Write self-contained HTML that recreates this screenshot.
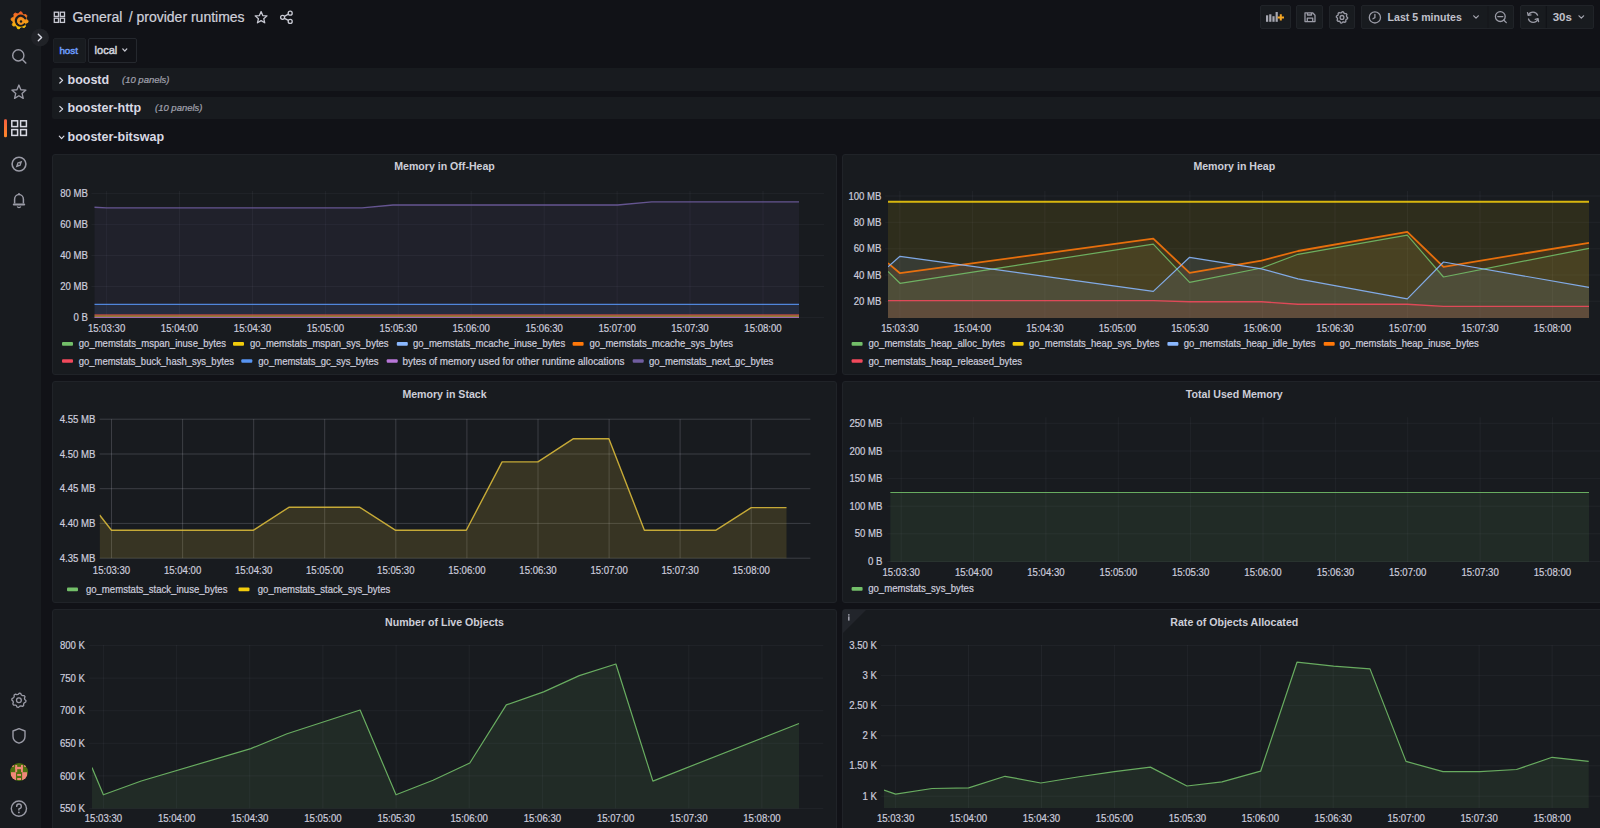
<!DOCTYPE html><html><head><meta charset="utf-8"><style>
*{margin:0;padding:0;box-sizing:border-box}
html,body{width:1600px;height:828px;overflow:hidden;background:#111217;font-family:"Liberation Sans",sans-serif;color:#ccccdc}
.abs{position:absolute}
.panel{position:absolute;background:#181b1f;border:1px solid #202328;border-radius:3px}
svg{position:absolute;left:0;top:0;overflow:visible}
svg text{font-family:"Liberation Sans",sans-serif}
</style></head><body>

<div class="abs" style="left:0;top:0;width:41px;height:828px;background:#181b1f"></div>
<div class="abs" style="left:52px;top:68px;width:1560px;height:23px;background:#181b1f;border-radius:2px"></div>
<div class="abs" style="left:52px;top:97px;width:1560px;height:22px;background:#181b1f;border-radius:2px"></div>
<div class="abs" style="left:52.5px;top:37.5px;width:33px;height:25px;background:#181b1f;border:1px solid #1e2126;border-radius:2px"></div>
<div class="abs" style="left:88px;top:37.5px;width:49px;height:25px;background:#111217;border:1px solid #25282e;border-radius:2px"></div>
<div class="abs" style="left:1260.0px;top:5px;width:31.0px;height:24px;background:#181b1f;border:1px solid #202328;border-radius:2px"></div>
<div class="abs" style="left:1296.0px;top:5px;width:27.0px;height:24px;background:#181b1f;border:1px solid #202328;border-radius:2px"></div>
<div class="abs" style="left:1329.0px;top:5px;width:26.0px;height:24px;background:#181b1f;border:1px solid #202328;border-radius:2px"></div>
<div class="abs" style="left:1361.0px;top:5px;width:153.0px;height:24px;background:#181b1f;border:1px solid #202328;border-radius:2px"></div>
<div class="abs" style="left:1520.0px;top:5px;width:74.0px;height:24px;background:#181b1f;border:1px solid #202328;border-radius:2px"></div>
<div class="panel" style="left:52px;top:154px;width:785px;height:221px"></div>
<div class="panel" style="left:842px;top:154px;width:785px;height:221px"></div>
<div class="panel" style="left:52px;top:381px;width:785px;height:222px"></div>
<div class="panel" style="left:842px;top:381px;width:785px;height:222px"></div>
<div class="panel" style="left:52px;top:609px;width:785px;height:240px"></div>
<div class="panel" style="left:842px;top:609px;width:785px;height:240px"></div>
<svg width="1600" height="828" viewBox="0 0 1600 828"><line x1="91.5" y1="193.6" x2="824.0" y2="193.6" stroke="rgba(204,204,220,0.055)" stroke-width="1"/>
<text x="88.0" y="197.2" font-size="11.0" fill="#ccccdc" text-anchor="end" font-weight="normal" font-style="normal" stroke="#ccccdc" stroke-width="0.22" textLength="27.75" lengthAdjust="spacingAndGlyphs">80 MB</text>
<line x1="91.5" y1="224.6" x2="824.0" y2="224.6" stroke="rgba(204,204,220,0.055)" stroke-width="1"/>
<text x="88.0" y="228.2" font-size="11.0" fill="#ccccdc" text-anchor="end" font-weight="normal" font-style="normal" stroke="#ccccdc" stroke-width="0.22" textLength="27.75" lengthAdjust="spacingAndGlyphs">60 MB</text>
<line x1="91.5" y1="255.5" x2="824.0" y2="255.5" stroke="rgba(204,204,220,0.055)" stroke-width="1"/>
<text x="88.0" y="259.1" font-size="11.0" fill="#ccccdc" text-anchor="end" font-weight="normal" font-style="normal" stroke="#ccccdc" stroke-width="0.22" textLength="27.75" lengthAdjust="spacingAndGlyphs">40 MB</text>
<line x1="91.5" y1="286.5" x2="824.0" y2="286.5" stroke="rgba(204,204,220,0.055)" stroke-width="1"/>
<text x="88.0" y="290.1" font-size="11.0" fill="#ccccdc" text-anchor="end" font-weight="normal" font-style="normal" stroke="#ccccdc" stroke-width="0.22" textLength="27.75" lengthAdjust="spacingAndGlyphs">20 MB</text>
<line x1="91.5" y1="317.4" x2="824.0" y2="317.4" stroke="rgba(204,204,220,0.055)" stroke-width="1"/>
<text x="88.0" y="321.0" font-size="11.0" fill="#ccccdc" text-anchor="end" font-weight="normal" font-style="normal" stroke="#ccccdc" stroke-width="0.22" textLength="14.41" lengthAdjust="spacingAndGlyphs">0 B</text>
<line x1="106.6" y1="191.0" x2="106.6" y2="318.0" stroke="rgba(204,204,220,0.055)" stroke-width="1"/>
<text x="106.6" y="331.6" font-size="11.0" fill="#ccccdc" text-anchor="middle" font-weight="normal" font-style="normal" stroke="#ccccdc" stroke-width="0.22" textLength="37.37" lengthAdjust="spacingAndGlyphs">15:03:30</text>
<line x1="179.5" y1="191.0" x2="179.5" y2="318.0" stroke="rgba(204,204,220,0.055)" stroke-width="1"/>
<text x="179.5" y="331.6" font-size="11.0" fill="#ccccdc" text-anchor="middle" font-weight="normal" font-style="normal" stroke="#ccccdc" stroke-width="0.22" textLength="37.37" lengthAdjust="spacingAndGlyphs">15:04:00</text>
<line x1="252.5" y1="191.0" x2="252.5" y2="318.0" stroke="rgba(204,204,220,0.055)" stroke-width="1"/>
<text x="252.5" y="331.6" font-size="11.0" fill="#ccccdc" text-anchor="middle" font-weight="normal" font-style="normal" stroke="#ccccdc" stroke-width="0.22" textLength="37.37" lengthAdjust="spacingAndGlyphs">15:04:30</text>
<line x1="325.4" y1="191.0" x2="325.4" y2="318.0" stroke="rgba(204,204,220,0.055)" stroke-width="1"/>
<text x="325.4" y="331.6" font-size="11.0" fill="#ccccdc" text-anchor="middle" font-weight="normal" font-style="normal" stroke="#ccccdc" stroke-width="0.22" textLength="37.37" lengthAdjust="spacingAndGlyphs">15:05:00</text>
<line x1="398.3" y1="191.0" x2="398.3" y2="318.0" stroke="rgba(204,204,220,0.055)" stroke-width="1"/>
<text x="398.3" y="331.6" font-size="11.0" fill="#ccccdc" text-anchor="middle" font-weight="normal" font-style="normal" stroke="#ccccdc" stroke-width="0.22" textLength="37.37" lengthAdjust="spacingAndGlyphs">15:05:30</text>
<line x1="471.2" y1="191.0" x2="471.2" y2="318.0" stroke="rgba(204,204,220,0.055)" stroke-width="1"/>
<text x="471.2" y="331.6" font-size="11.0" fill="#ccccdc" text-anchor="middle" font-weight="normal" font-style="normal" stroke="#ccccdc" stroke-width="0.22" textLength="37.37" lengthAdjust="spacingAndGlyphs">15:06:00</text>
<line x1="544.2" y1="191.0" x2="544.2" y2="318.0" stroke="rgba(204,204,220,0.055)" stroke-width="1"/>
<text x="544.2" y="331.6" font-size="11.0" fill="#ccccdc" text-anchor="middle" font-weight="normal" font-style="normal" stroke="#ccccdc" stroke-width="0.22" textLength="37.37" lengthAdjust="spacingAndGlyphs">15:06:30</text>
<line x1="617.1" y1="191.0" x2="617.1" y2="318.0" stroke="rgba(204,204,220,0.055)" stroke-width="1"/>
<text x="617.1" y="331.6" font-size="11.0" fill="#ccccdc" text-anchor="middle" font-weight="normal" font-style="normal" stroke="#ccccdc" stroke-width="0.22" textLength="37.37" lengthAdjust="spacingAndGlyphs">15:07:00</text>
<line x1="690.0" y1="191.0" x2="690.0" y2="318.0" stroke="rgba(204,204,220,0.055)" stroke-width="1"/>
<text x="690.0" y="331.6" font-size="11.0" fill="#ccccdc" text-anchor="middle" font-weight="normal" font-style="normal" stroke="#ccccdc" stroke-width="0.22" textLength="37.37" lengthAdjust="spacingAndGlyphs">15:07:30</text>
<line x1="763.0" y1="191.0" x2="763.0" y2="318.0" stroke="rgba(204,204,220,0.055)" stroke-width="1"/>
<text x="763.0" y="331.6" font-size="11.0" fill="#ccccdc" text-anchor="middle" font-weight="normal" font-style="normal" stroke="#ccccdc" stroke-width="0.22" textLength="37.37" lengthAdjust="spacingAndGlyphs">15:08:00</text>
<clipPath id="c30"><rect x="94.3" y="181.0" width="729.7" height="137.0"/></clipPath>
<g clip-path="url(#c30)">
<path d="M94.3,207.2 L106.6,207.9 L362.0,207.9 L393.0,205.0 L617.6,205.0 L651.7,201.9 L799.0,201.9 L799.0,320.0 L94.3,320.0Z" fill="#705da0" fill-opacity="0.1"/>
<path d="M94.3,304.4 L799.0,304.4 L799.0,320.0 L94.3,320.0Z" fill="#5794f2" fill-opacity="0.1"/>
<path d="M94.3,314.5 L799.0,314.5 L799.0,320.0 L94.3,320.0Z" fill="#f2495c" fill-opacity="0.1"/>
<path d="M94.3,315.3 L799.0,315.3 L799.0,320.0 L94.3,320.0Z" fill="#e8802a" fill-opacity="0.1"/>
<path d="M94.3,316.4 L799.0,316.4 L799.0,320.0 L94.3,320.0Z" fill="#a89a40" fill-opacity="0.1"/>
<path d="M94.3,317.6 L799.0,317.6 L799.0,320.0 L94.3,320.0Z" fill="#b877d9" fill-opacity="0.1"/>
<path d="M94.3,207.2 L106.6,207.9 L362.0,207.9 L393.0,205.0 L617.6,205.0 L651.7,201.9 L799.0,201.9" fill="none" stroke="#705da0" stroke-width="1.4" stroke-opacity="0.88" stroke-linejoin="round"/>
<path d="M94.3,304.4 L799.0,304.4" fill="none" stroke="#5794f2" stroke-width="1.2" stroke-opacity="0.88" stroke-linejoin="round"/>
<path d="M94.3,314.5 L799.0,314.5" fill="none" stroke="#f2495c" stroke-width="0.7" stroke-opacity="0.6" stroke-linejoin="round"/>
<path d="M94.3,315.3 L799.0,315.3" fill="none" stroke="#e8802a" stroke-width="0.9" stroke-opacity="0.8" stroke-linejoin="round"/>
<path d="M94.3,316.4 L799.0,316.4" fill="none" stroke="#a89a40" stroke-width="1.0" stroke-opacity="0.8" stroke-linejoin="round"/>
<path d="M94.3,317.6 L799.0,317.6" fill="none" stroke="#b877d9" stroke-width="1.0" stroke-opacity="0.8" stroke-linejoin="round"/>
</g>
<rect x="62.0" y="342.1" width="11" height="3.6" rx="1" fill="#73bf69"/>
<text x="78.8" y="347.4" font-size="10.3" fill="#ccccdc" text-anchor="start" font-weight="normal" font-style="normal" stroke="#ccccdc" stroke-width="0.22" textLength="147.2" lengthAdjust="spacingAndGlyphs">go_memstats_mspan_inuse_bytes</text>
<rect x="233.0" y="342.1" width="11" height="3.6" rx="1" fill="#f2cc0c"/>
<text x="250.0" y="347.4" font-size="10.3" fill="#ccccdc" text-anchor="start" font-weight="normal" font-style="normal" stroke="#ccccdc" stroke-width="0.22" textLength="138.6" lengthAdjust="spacingAndGlyphs">go_memstats_mspan_sys_bytes</text>
<rect x="396.8" y="342.1" width="11" height="3.6" rx="1" fill="#8ab8ff"/>
<text x="413.0" y="347.4" font-size="10.3" fill="#ccccdc" text-anchor="start" font-weight="normal" font-style="normal" stroke="#ccccdc" stroke-width="0.22" textLength="152.2" lengthAdjust="spacingAndGlyphs">go_memstats_mcache_inuse_bytes</text>
<rect x="572.6" y="342.1" width="11" height="3.6" rx="1" fill="#ff780a"/>
<text x="589.5" y="347.4" font-size="10.3" fill="#ccccdc" text-anchor="start" font-weight="normal" font-style="normal" stroke="#ccccdc" stroke-width="0.22" textLength="143.5" lengthAdjust="spacingAndGlyphs">go_memstats_mcache_sys_bytes</text>
<rect x="62.0" y="359.2" width="11" height="3.6" rx="1" fill="#f2495c"/>
<text x="78.8" y="364.5" font-size="10.3" fill="#ccccdc" text-anchor="start" font-weight="normal" font-style="normal" stroke="#ccccdc" stroke-width="0.22" textLength="155.2" lengthAdjust="spacingAndGlyphs">go_memstats_buck_hash_sys_bytes</text>
<rect x="241.3" y="359.2" width="11" height="3.6" rx="1" fill="#5794f2"/>
<text x="258.3" y="364.5" font-size="10.3" fill="#ccccdc" text-anchor="start" font-weight="normal" font-style="normal" stroke="#ccccdc" stroke-width="0.22" textLength="120.2" lengthAdjust="spacingAndGlyphs">go_memstats_gc_sys_bytes</text>
<rect x="386.7" y="359.2" width="11" height="3.6" rx="1" fill="#b877d9"/>
<text x="402.5" y="364.5" font-size="10.3" fill="#ccccdc" text-anchor="start" font-weight="normal" font-style="normal" stroke="#ccccdc" stroke-width="0.22" textLength="222.0" lengthAdjust="spacingAndGlyphs">bytes of memory used for other runtime allocations</text>
<rect x="632.7" y="359.2" width="11" height="3.6" rx="1" fill="#705da0"/>
<text x="649.0" y="364.5" font-size="10.3" fill="#ccccdc" text-anchor="start" font-weight="normal" font-style="normal" stroke="#ccccdc" stroke-width="0.22" textLength="124.4" lengthAdjust="spacingAndGlyphs">go_memstats_next_gc_bytes</text>
<line x1="885.1" y1="196.0" x2="1600.0" y2="196.0" stroke="rgba(204,204,220,0.055)" stroke-width="1"/>
<text x="881.5" y="199.6" font-size="11.0" fill="#ccccdc" text-anchor="end" font-weight="normal" font-style="normal" stroke="#ccccdc" stroke-width="0.22" textLength="33.09" lengthAdjust="spacingAndGlyphs">100 MB</text>
<line x1="885.1" y1="222.3" x2="1600.0" y2="222.3" stroke="rgba(204,204,220,0.055)" stroke-width="1"/>
<text x="881.5" y="225.9" font-size="11.0" fill="#ccccdc" text-anchor="end" font-weight="normal" font-style="normal" stroke="#ccccdc" stroke-width="0.22" textLength="27.75" lengthAdjust="spacingAndGlyphs">80 MB</text>
<line x1="885.1" y1="248.8" x2="1600.0" y2="248.8" stroke="rgba(204,204,220,0.055)" stroke-width="1"/>
<text x="881.5" y="252.4" font-size="11.0" fill="#ccccdc" text-anchor="end" font-weight="normal" font-style="normal" stroke="#ccccdc" stroke-width="0.22" textLength="27.75" lengthAdjust="spacingAndGlyphs">60 MB</text>
<line x1="885.1" y1="275.0" x2="1600.0" y2="275.0" stroke="rgba(204,204,220,0.055)" stroke-width="1"/>
<text x="881.5" y="278.6" font-size="11.0" fill="#ccccdc" text-anchor="end" font-weight="normal" font-style="normal" stroke="#ccccdc" stroke-width="0.22" textLength="27.75" lengthAdjust="spacingAndGlyphs">40 MB</text>
<line x1="885.1" y1="301.2" x2="1600.0" y2="301.2" stroke="rgba(204,204,220,0.055)" stroke-width="1"/>
<text x="881.5" y="304.8" font-size="11.0" fill="#ccccdc" text-anchor="end" font-weight="normal" font-style="normal" stroke="#ccccdc" stroke-width="0.22" textLength="27.75" lengthAdjust="spacingAndGlyphs">20 MB</text>
<line x1="899.9" y1="191.0" x2="899.9" y2="318.0" stroke="rgba(204,204,220,0.055)" stroke-width="1"/>
<text x="899.9" y="331.6" font-size="11.0" fill="#ccccdc" text-anchor="middle" font-weight="normal" font-style="normal" stroke="#ccccdc" stroke-width="0.22" textLength="37.37" lengthAdjust="spacingAndGlyphs">15:03:30</text>
<line x1="972.4" y1="191.0" x2="972.4" y2="318.0" stroke="rgba(204,204,220,0.055)" stroke-width="1"/>
<text x="972.4" y="331.6" font-size="11.0" fill="#ccccdc" text-anchor="middle" font-weight="normal" font-style="normal" stroke="#ccccdc" stroke-width="0.22" textLength="37.37" lengthAdjust="spacingAndGlyphs">15:04:00</text>
<line x1="1044.9" y1="191.0" x2="1044.9" y2="318.0" stroke="rgba(204,204,220,0.055)" stroke-width="1"/>
<text x="1044.9" y="331.6" font-size="11.0" fill="#ccccdc" text-anchor="middle" font-weight="normal" font-style="normal" stroke="#ccccdc" stroke-width="0.22" textLength="37.37" lengthAdjust="spacingAndGlyphs">15:04:30</text>
<line x1="1117.4" y1="191.0" x2="1117.4" y2="318.0" stroke="rgba(204,204,220,0.055)" stroke-width="1"/>
<text x="1117.4" y="331.6" font-size="11.0" fill="#ccccdc" text-anchor="middle" font-weight="normal" font-style="normal" stroke="#ccccdc" stroke-width="0.22" textLength="37.37" lengthAdjust="spacingAndGlyphs">15:05:00</text>
<line x1="1189.9" y1="191.0" x2="1189.9" y2="318.0" stroke="rgba(204,204,220,0.055)" stroke-width="1"/>
<text x="1189.9" y="331.6" font-size="11.0" fill="#ccccdc" text-anchor="middle" font-weight="normal" font-style="normal" stroke="#ccccdc" stroke-width="0.22" textLength="37.37" lengthAdjust="spacingAndGlyphs">15:05:30</text>
<line x1="1262.5" y1="191.0" x2="1262.5" y2="318.0" stroke="rgba(204,204,220,0.055)" stroke-width="1"/>
<text x="1262.5" y="331.6" font-size="11.0" fill="#ccccdc" text-anchor="middle" font-weight="normal" font-style="normal" stroke="#ccccdc" stroke-width="0.22" textLength="37.37" lengthAdjust="spacingAndGlyphs">15:06:00</text>
<line x1="1335.0" y1="191.0" x2="1335.0" y2="318.0" stroke="rgba(204,204,220,0.055)" stroke-width="1"/>
<text x="1335.0" y="331.6" font-size="11.0" fill="#ccccdc" text-anchor="middle" font-weight="normal" font-style="normal" stroke="#ccccdc" stroke-width="0.22" textLength="37.37" lengthAdjust="spacingAndGlyphs">15:06:30</text>
<line x1="1407.5" y1="191.0" x2="1407.5" y2="318.0" stroke="rgba(204,204,220,0.055)" stroke-width="1"/>
<text x="1407.5" y="331.6" font-size="11.0" fill="#ccccdc" text-anchor="middle" font-weight="normal" font-style="normal" stroke="#ccccdc" stroke-width="0.22" textLength="37.37" lengthAdjust="spacingAndGlyphs">15:07:00</text>
<line x1="1480.0" y1="191.0" x2="1480.0" y2="318.0" stroke="rgba(204,204,220,0.055)" stroke-width="1"/>
<text x="1480.0" y="331.6" font-size="11.0" fill="#ccccdc" text-anchor="middle" font-weight="normal" font-style="normal" stroke="#ccccdc" stroke-width="0.22" textLength="37.37" lengthAdjust="spacingAndGlyphs">15:07:30</text>
<line x1="1552.5" y1="191.0" x2="1552.5" y2="318.0" stroke="rgba(204,204,220,0.055)" stroke-width="1"/>
<text x="1552.5" y="331.6" font-size="11.0" fill="#ccccdc" text-anchor="middle" font-weight="normal" font-style="normal" stroke="#ccccdc" stroke-width="0.22" textLength="37.37" lengthAdjust="spacingAndGlyphs">15:08:00</text>
<clipPath id="c91"><rect x="887.9" y="182.0" width="712.1" height="136.0"/></clipPath>
<g clip-path="url(#c91)">
<path d="M888.0,201.8 L1589.0,201.8 L1589.0,320.0 L888.0,320.0Z" fill="#f2cc0c" fill-opacity="0.1"/>
<path d="M888.0,263.1 L900.0,273.2 L1153.3,238.7 L1189.6,272.8 L1261.5,260.6 L1298.0,251.0 L1407.3,231.9 L1443.5,266.8 L1589.0,242.8 L1589.0,320.0 L888.0,320.0Z" fill="#ff780a" fill-opacity="0.1"/>
<path d="M888.0,271.4 L900.0,283.3 L1153.3,244.2 L1189.6,282.4 L1261.5,268.0 L1298.0,254.3 L1407.3,235.2 L1443.5,277.0 L1589.0,248.3 L1589.0,320.0 L888.0,320.0Z" fill="#73bf69" fill-opacity="0.1"/>
<path d="M888.0,266.9 L900.0,256.3 L1153.3,291.4 L1189.6,257.3 L1261.5,268.8 L1298.0,278.9 L1407.3,298.8 L1443.5,262.0 L1589.0,287.3 L1589.0,320.0 L888.0,320.0Z" fill="#8ab8ff" fill-opacity="0.1"/>
<path d="M888.0,300.6 L900.0,300.6 L1153.3,300.6 L1189.6,301.8 L1261.5,301.8 L1298.0,304.2 L1407.3,304.2 L1443.5,306.4 L1589.0,306.4 L1589.0,320.0 L888.0,320.0Z" fill="#f2495c" fill-opacity="0.1"/>
<path d="M888.0,201.8 L1589.0,201.8" fill="none" stroke="#f2cc0c" stroke-width="2" stroke-opacity="0.88" stroke-linejoin="round"/>
<path d="M888.0,263.1 L900.0,273.2 L1153.3,238.7 L1189.6,272.8 L1261.5,260.6 L1298.0,251.0 L1407.3,231.9 L1443.5,266.8 L1589.0,242.8" fill="none" stroke="#ff780a" stroke-width="1.8" stroke-opacity="0.88" stroke-linejoin="round"/>
<path d="M888.0,271.4 L900.0,283.3 L1153.3,244.2 L1189.6,282.4 L1261.5,268.0 L1298.0,254.3 L1407.3,235.2 L1443.5,277.0 L1589.0,248.3" fill="none" stroke="#73bf69" stroke-width="1.2" stroke-opacity="0.88" stroke-linejoin="round"/>
<path d="M888.0,266.9 L900.0,256.3 L1153.3,291.4 L1189.6,257.3 L1261.5,268.8 L1298.0,278.9 L1407.3,298.8 L1443.5,262.0 L1589.0,287.3" fill="none" stroke="#8ab8ff" stroke-width="1.2" stroke-opacity="0.88" stroke-linejoin="round"/>
<path d="M888.0,300.6 L900.0,300.6 L1153.3,300.6 L1189.6,301.8 L1261.5,301.8 L1298.0,304.2 L1407.3,304.2 L1443.5,306.4 L1589.0,306.4" fill="none" stroke="#f2495c" stroke-width="1.4" stroke-opacity="0.88" stroke-linejoin="round"/>
</g>
<rect x="851.6" y="342.1" width="11" height="3.6" rx="1" fill="#73bf69"/>
<text x="868.5" y="347.4" font-size="10.3" fill="#ccccdc" text-anchor="start" font-weight="normal" font-style="normal" stroke="#ccccdc" stroke-width="0.22" textLength="136.5" lengthAdjust="spacingAndGlyphs">go_memstats_heap_alloc_bytes</text>
<rect x="1012.6" y="342.1" width="11" height="3.6" rx="1" fill="#f2cc0c"/>
<text x="1029.0" y="347.4" font-size="10.3" fill="#ccccdc" text-anchor="start" font-weight="normal" font-style="normal" stroke="#ccccdc" stroke-width="0.22" textLength="130.5" lengthAdjust="spacingAndGlyphs">go_memstats_heap_sys_bytes</text>
<rect x="1167.4" y="342.1" width="11" height="3.6" rx="1" fill="#8ab8ff"/>
<text x="1183.8" y="347.4" font-size="10.3" fill="#ccccdc" text-anchor="start" font-weight="normal" font-style="normal" stroke="#ccccdc" stroke-width="0.22" textLength="131.7" lengthAdjust="spacingAndGlyphs">go_memstats_heap_idle_bytes</text>
<rect x="1323.7" y="342.1" width="11" height="3.6" rx="1" fill="#ff780a"/>
<text x="1339.6" y="347.4" font-size="10.3" fill="#ccccdc" text-anchor="start" font-weight="normal" font-style="normal" stroke="#ccccdc" stroke-width="0.22" textLength="139.2" lengthAdjust="spacingAndGlyphs">go_memstats_heap_inuse_bytes</text>
<rect x="851.6" y="359.2" width="11" height="3.6" rx="1" fill="#f2495c"/>
<text x="868.5" y="364.5" font-size="10.3" fill="#ccccdc" text-anchor="start" font-weight="normal" font-style="normal" stroke="#ccccdc" stroke-width="0.22" textLength="153.5" lengthAdjust="spacingAndGlyphs">go_memstats_heap_released_bytes</text>
<line x1="99.6" y1="419.2" x2="810.4" y2="419.2" stroke="rgba(204,204,220,0.2)" stroke-width="1"/>
<text x="95.5" y="422.8" font-size="11.0" fill="#ccccdc" text-anchor="end" font-weight="normal" font-style="normal" stroke="#ccccdc" stroke-width="0.22" textLength="35.75" lengthAdjust="spacingAndGlyphs">4.55 MB</text>
<line x1="99.6" y1="454.0" x2="810.4" y2="454.0" stroke="rgba(204,204,220,0.2)" stroke-width="1"/>
<text x="95.5" y="457.6" font-size="11.0" fill="#ccccdc" text-anchor="end" font-weight="normal" font-style="normal" stroke="#ccccdc" stroke-width="0.22" textLength="35.75" lengthAdjust="spacingAndGlyphs">4.50 MB</text>
<line x1="99.6" y1="488.7" x2="810.4" y2="488.7" stroke="rgba(204,204,220,0.2)" stroke-width="1"/>
<text x="95.5" y="492.3" font-size="11.0" fill="#ccccdc" text-anchor="end" font-weight="normal" font-style="normal" stroke="#ccccdc" stroke-width="0.22" textLength="35.75" lengthAdjust="spacingAndGlyphs">4.45 MB</text>
<line x1="99.6" y1="523.4" x2="810.4" y2="523.4" stroke="rgba(204,204,220,0.2)" stroke-width="1"/>
<text x="95.5" y="527.0" font-size="11.0" fill="#ccccdc" text-anchor="end" font-weight="normal" font-style="normal" stroke="#ccccdc" stroke-width="0.22" textLength="35.75" lengthAdjust="spacingAndGlyphs">4.40 MB</text>
<line x1="99.6" y1="558.2" x2="810.4" y2="558.2" stroke="rgba(204,204,220,0.2)" stroke-width="1"/>
<text x="95.5" y="561.8" font-size="11.0" fill="#ccccdc" text-anchor="end" font-weight="normal" font-style="normal" stroke="#ccccdc" stroke-width="0.22" textLength="35.75" lengthAdjust="spacingAndGlyphs">4.35 MB</text>
<line x1="111.5" y1="419.2" x2="111.5" y2="558.2" stroke="rgba(204,204,220,0.2)" stroke-width="1"/>
<text x="111.5" y="573.6" font-size="11.0" fill="#ccccdc" text-anchor="middle" font-weight="normal" font-style="normal" stroke="#ccccdc" stroke-width="0.22" textLength="37.37" lengthAdjust="spacingAndGlyphs">15:03:30</text>
<line x1="182.6" y1="419.2" x2="182.6" y2="558.2" stroke="rgba(204,204,220,0.2)" stroke-width="1"/>
<text x="182.6" y="573.6" font-size="11.0" fill="#ccccdc" text-anchor="middle" font-weight="normal" font-style="normal" stroke="#ccccdc" stroke-width="0.22" textLength="37.37" lengthAdjust="spacingAndGlyphs">15:04:00</text>
<line x1="253.7" y1="419.2" x2="253.7" y2="558.2" stroke="rgba(204,204,220,0.2)" stroke-width="1"/>
<text x="253.7" y="573.6" font-size="11.0" fill="#ccccdc" text-anchor="middle" font-weight="normal" font-style="normal" stroke="#ccccdc" stroke-width="0.22" textLength="37.37" lengthAdjust="spacingAndGlyphs">15:04:30</text>
<line x1="324.7" y1="419.2" x2="324.7" y2="558.2" stroke="rgba(204,204,220,0.2)" stroke-width="1"/>
<text x="324.7" y="573.6" font-size="11.0" fill="#ccccdc" text-anchor="middle" font-weight="normal" font-style="normal" stroke="#ccccdc" stroke-width="0.22" textLength="37.37" lengthAdjust="spacingAndGlyphs">15:05:00</text>
<line x1="395.8" y1="419.2" x2="395.8" y2="558.2" stroke="rgba(204,204,220,0.2)" stroke-width="1"/>
<text x="395.8" y="573.6" font-size="11.0" fill="#ccccdc" text-anchor="middle" font-weight="normal" font-style="normal" stroke="#ccccdc" stroke-width="0.22" textLength="37.37" lengthAdjust="spacingAndGlyphs">15:05:30</text>
<line x1="466.9" y1="419.2" x2="466.9" y2="558.2" stroke="rgba(204,204,220,0.2)" stroke-width="1"/>
<text x="466.9" y="573.6" font-size="11.0" fill="#ccccdc" text-anchor="middle" font-weight="normal" font-style="normal" stroke="#ccccdc" stroke-width="0.22" textLength="37.37" lengthAdjust="spacingAndGlyphs">15:06:00</text>
<line x1="538.0" y1="419.2" x2="538.0" y2="558.2" stroke="rgba(204,204,220,0.2)" stroke-width="1"/>
<text x="538.0" y="573.6" font-size="11.0" fill="#ccccdc" text-anchor="middle" font-weight="normal" font-style="normal" stroke="#ccccdc" stroke-width="0.22" textLength="37.37" lengthAdjust="spacingAndGlyphs">15:06:30</text>
<line x1="609.1" y1="419.2" x2="609.1" y2="558.2" stroke="rgba(204,204,220,0.2)" stroke-width="1"/>
<text x="609.1" y="573.6" font-size="11.0" fill="#ccccdc" text-anchor="middle" font-weight="normal" font-style="normal" stroke="#ccccdc" stroke-width="0.22" textLength="37.37" lengthAdjust="spacingAndGlyphs">15:07:00</text>
<line x1="680.1" y1="419.2" x2="680.1" y2="558.2" stroke="rgba(204,204,220,0.2)" stroke-width="1"/>
<text x="680.1" y="573.6" font-size="11.0" fill="#ccccdc" text-anchor="middle" font-weight="normal" font-style="normal" stroke="#ccccdc" stroke-width="0.22" textLength="37.37" lengthAdjust="spacingAndGlyphs">15:07:30</text>
<line x1="751.2" y1="419.2" x2="751.2" y2="558.2" stroke="rgba(204,204,220,0.2)" stroke-width="1"/>
<text x="751.2" y="573.6" font-size="11.0" fill="#ccccdc" text-anchor="middle" font-weight="normal" font-style="normal" stroke="#ccccdc" stroke-width="0.22" textLength="37.37" lengthAdjust="spacingAndGlyphs">15:08:00</text>
<clipPath id="c144"><rect x="99.6" y="413.2" width="710.8" height="145.0"/></clipPath>
<g clip-path="url(#c144)">
<path d="M99.6,515.0 L111.5,530.2 L253.5,530.2 L288.9,507.3 L359.8,507.3 L395.3,530.2 L466.3,530.2 L502.1,461.9 L537.9,461.9 L573.1,438.8 L608.9,438.8 L644.4,530.2 L716.0,530.2 L751.2,507.6 L786.5,507.6 L786.5,560.2 L99.6,560.2Z" fill="#dcbc3a" fill-opacity="0.16"/>
<path d="M99.6,515.0 L111.5,530.2 L253.5,530.2 L288.9,507.3 L359.8,507.3 L395.3,530.2 L466.3,530.2 L502.1,461.9 L537.9,461.9 L573.1,438.8 L608.9,438.8 L644.4,530.2 L716.0,530.2 L751.2,507.6 L786.5,507.6" fill="none" stroke="#dcbc3a" stroke-width="1.4" stroke-opacity="0.88" stroke-linejoin="round"/>
</g>
<rect x="67.0" y="587.6" width="11" height="3.6" rx="1" fill="#73bf69"/>
<text x="85.9" y="592.9" font-size="10.3" fill="#ccccdc" text-anchor="start" font-weight="normal" font-style="normal" stroke="#ccccdc" stroke-width="0.22" textLength="141.6" lengthAdjust="spacingAndGlyphs">go_memstats_stack_inuse_bytes</text>
<rect x="238.5" y="587.6" width="11" height="3.6" rx="1" fill="#f2cc0c"/>
<text x="257.8" y="592.9" font-size="10.3" fill="#ccccdc" text-anchor="start" font-weight="normal" font-style="normal" stroke="#ccccdc" stroke-width="0.22" textLength="132.5" lengthAdjust="spacingAndGlyphs">go_memstats_stack_sys_bytes</text>
<line x1="887.4" y1="423.3" x2="1600.0" y2="423.3" stroke="rgba(204,204,220,0.055)" stroke-width="1"/>
<text x="882.5" y="426.9" font-size="11.0" fill="#ccccdc" text-anchor="end" font-weight="normal" font-style="normal" stroke="#ccccdc" stroke-width="0.22" textLength="33.09" lengthAdjust="spacingAndGlyphs">250 MB</text>
<line x1="887.4" y1="451.0" x2="1600.0" y2="451.0" stroke="rgba(204,204,220,0.055)" stroke-width="1"/>
<text x="882.5" y="454.6" font-size="11.0" fill="#ccccdc" text-anchor="end" font-weight="normal" font-style="normal" stroke="#ccccdc" stroke-width="0.22" textLength="33.09" lengthAdjust="spacingAndGlyphs">200 MB</text>
<line x1="887.4" y1="478.6" x2="1600.0" y2="478.6" stroke="rgba(204,204,220,0.055)" stroke-width="1"/>
<text x="882.5" y="482.2" font-size="11.0" fill="#ccccdc" text-anchor="end" font-weight="normal" font-style="normal" stroke="#ccccdc" stroke-width="0.22" textLength="33.09" lengthAdjust="spacingAndGlyphs">150 MB</text>
<line x1="887.4" y1="506.2" x2="1600.0" y2="506.2" stroke="rgba(204,204,220,0.055)" stroke-width="1"/>
<text x="882.5" y="509.8" font-size="11.0" fill="#ccccdc" text-anchor="end" font-weight="normal" font-style="normal" stroke="#ccccdc" stroke-width="0.22" textLength="33.09" lengthAdjust="spacingAndGlyphs">100 MB</text>
<line x1="887.4" y1="533.8" x2="1600.0" y2="533.8" stroke="rgba(204,204,220,0.055)" stroke-width="1"/>
<text x="882.5" y="537.4" font-size="11.0" fill="#ccccdc" text-anchor="end" font-weight="normal" font-style="normal" stroke="#ccccdc" stroke-width="0.22" textLength="27.75" lengthAdjust="spacingAndGlyphs">50 MB</text>
<line x1="887.4" y1="561.5" x2="1600.0" y2="561.5" stroke="rgba(204,204,220,0.055)" stroke-width="1"/>
<text x="882.5" y="565.1" font-size="11.0" fill="#ccccdc" text-anchor="end" font-weight="normal" font-style="normal" stroke="#ccccdc" stroke-width="0.22" textLength="14.41" lengthAdjust="spacingAndGlyphs">0 B</text>
<line x1="901.2" y1="417.3" x2="901.2" y2="562.0" stroke="rgba(204,204,220,0.055)" stroke-width="1"/>
<text x="901.2" y="575.6" font-size="11.0" fill="#ccccdc" text-anchor="middle" font-weight="normal" font-style="normal" stroke="#ccccdc" stroke-width="0.22" textLength="37.37" lengthAdjust="spacingAndGlyphs">15:03:30</text>
<line x1="973.6" y1="417.3" x2="973.6" y2="562.0" stroke="rgba(204,204,220,0.055)" stroke-width="1"/>
<text x="973.6" y="575.6" font-size="11.0" fill="#ccccdc" text-anchor="middle" font-weight="normal" font-style="normal" stroke="#ccccdc" stroke-width="0.22" textLength="37.37" lengthAdjust="spacingAndGlyphs">15:04:00</text>
<line x1="1045.9" y1="417.3" x2="1045.9" y2="562.0" stroke="rgba(204,204,220,0.055)" stroke-width="1"/>
<text x="1045.9" y="575.6" font-size="11.0" fill="#ccccdc" text-anchor="middle" font-weight="normal" font-style="normal" stroke="#ccccdc" stroke-width="0.22" textLength="37.37" lengthAdjust="spacingAndGlyphs">15:04:30</text>
<line x1="1118.3" y1="417.3" x2="1118.3" y2="562.0" stroke="rgba(204,204,220,0.055)" stroke-width="1"/>
<text x="1118.3" y="575.6" font-size="11.0" fill="#ccccdc" text-anchor="middle" font-weight="normal" font-style="normal" stroke="#ccccdc" stroke-width="0.22" textLength="37.37" lengthAdjust="spacingAndGlyphs">15:05:00</text>
<line x1="1190.6" y1="417.3" x2="1190.6" y2="562.0" stroke="rgba(204,204,220,0.055)" stroke-width="1"/>
<text x="1190.6" y="575.6" font-size="11.0" fill="#ccccdc" text-anchor="middle" font-weight="normal" font-style="normal" stroke="#ccccdc" stroke-width="0.22" textLength="37.37" lengthAdjust="spacingAndGlyphs">15:05:30</text>
<line x1="1263.0" y1="417.3" x2="1263.0" y2="562.0" stroke="rgba(204,204,220,0.055)" stroke-width="1"/>
<text x="1263.0" y="575.6" font-size="11.0" fill="#ccccdc" text-anchor="middle" font-weight="normal" font-style="normal" stroke="#ccccdc" stroke-width="0.22" textLength="37.37" lengthAdjust="spacingAndGlyphs">15:06:00</text>
<line x1="1335.4" y1="417.3" x2="1335.4" y2="562.0" stroke="rgba(204,204,220,0.055)" stroke-width="1"/>
<text x="1335.4" y="575.6" font-size="11.0" fill="#ccccdc" text-anchor="middle" font-weight="normal" font-style="normal" stroke="#ccccdc" stroke-width="0.22" textLength="37.37" lengthAdjust="spacingAndGlyphs">15:06:30</text>
<line x1="1407.7" y1="417.3" x2="1407.7" y2="562.0" stroke="rgba(204,204,220,0.055)" stroke-width="1"/>
<text x="1407.7" y="575.6" font-size="11.0" fill="#ccccdc" text-anchor="middle" font-weight="normal" font-style="normal" stroke="#ccccdc" stroke-width="0.22" textLength="37.37" lengthAdjust="spacingAndGlyphs">15:07:00</text>
<line x1="1480.1" y1="417.3" x2="1480.1" y2="562.0" stroke="rgba(204,204,220,0.055)" stroke-width="1"/>
<text x="1480.1" y="575.6" font-size="11.0" fill="#ccccdc" text-anchor="middle" font-weight="normal" font-style="normal" stroke="#ccccdc" stroke-width="0.22" textLength="37.37" lengthAdjust="spacingAndGlyphs">15:07:30</text>
<line x1="1552.4" y1="417.3" x2="1552.4" y2="562.0" stroke="rgba(204,204,220,0.055)" stroke-width="1"/>
<text x="1552.4" y="575.6" font-size="11.0" fill="#ccccdc" text-anchor="middle" font-weight="normal" font-style="normal" stroke="#ccccdc" stroke-width="0.22" textLength="37.37" lengthAdjust="spacingAndGlyphs">15:08:00</text>
<clipPath id="c185"><rect x="890.2" y="410.0" width="709.8" height="152.0"/></clipPath>
<g clip-path="url(#c185)">
<path d="M890.2,492.5 L1589.0,492.5 L1589.0,564.0 L890.2,564.0Z" fill="#73bf69" fill-opacity="0.1"/>
<path d="M890.2,492.5 L1589.0,492.5" fill="none" stroke="#73bf69" stroke-width="1.2" stroke-opacity="0.88" stroke-linejoin="round"/>
</g>
<rect x="851.6" y="587.1" width="11" height="3.6" rx="1" fill="#73bf69"/>
<text x="868.2" y="592.4" font-size="10.3" fill="#ccccdc" text-anchor="start" font-weight="normal" font-style="normal" stroke="#ccccdc" stroke-width="0.22" textLength="105.5" lengthAdjust="spacingAndGlyphs">go_memstats_sys_bytes</text>
<line x1="89.2" y1="645.4" x2="823.3" y2="645.4" stroke="rgba(204,204,220,0.055)" stroke-width="1"/>
<text x="85.0" y="649.0" font-size="11.0" fill="#ccccdc" text-anchor="end" font-weight="normal" font-style="normal" stroke="#ccccdc" stroke-width="0.22" textLength="25.09" lengthAdjust="spacingAndGlyphs">800 K</text>
<line x1="89.2" y1="678.1" x2="823.3" y2="678.1" stroke="rgba(204,204,220,0.055)" stroke-width="1"/>
<text x="85.0" y="681.7" font-size="11.0" fill="#ccccdc" text-anchor="end" font-weight="normal" font-style="normal" stroke="#ccccdc" stroke-width="0.22" textLength="25.09" lengthAdjust="spacingAndGlyphs">750 K</text>
<line x1="89.2" y1="710.7" x2="823.3" y2="710.7" stroke="rgba(204,204,220,0.055)" stroke-width="1"/>
<text x="85.0" y="714.3" font-size="11.0" fill="#ccccdc" text-anchor="end" font-weight="normal" font-style="normal" stroke="#ccccdc" stroke-width="0.22" textLength="25.09" lengthAdjust="spacingAndGlyphs">700 K</text>
<line x1="89.2" y1="743.3" x2="823.3" y2="743.3" stroke="rgba(204,204,220,0.055)" stroke-width="1"/>
<text x="85.0" y="746.9" font-size="11.0" fill="#ccccdc" text-anchor="end" font-weight="normal" font-style="normal" stroke="#ccccdc" stroke-width="0.22" textLength="25.09" lengthAdjust="spacingAndGlyphs">650 K</text>
<line x1="89.2" y1="775.9" x2="823.3" y2="775.9" stroke="rgba(204,204,220,0.055)" stroke-width="1"/>
<text x="85.0" y="779.5" font-size="11.0" fill="#ccccdc" text-anchor="end" font-weight="normal" font-style="normal" stroke="#ccccdc" stroke-width="0.22" textLength="25.09" lengthAdjust="spacingAndGlyphs">600 K</text>
<line x1="89.2" y1="808.4" x2="823.3" y2="808.4" stroke="rgba(204,204,220,0.055)" stroke-width="1"/>
<text x="85.0" y="812.0" font-size="11.0" fill="#ccccdc" text-anchor="end" font-weight="normal" font-style="normal" stroke="#ccccdc" stroke-width="0.22" textLength="25.09" lengthAdjust="spacingAndGlyphs">550 K</text>
<line x1="103.4" y1="645.0" x2="103.4" y2="808.4" stroke="rgba(204,204,220,0.055)" stroke-width="1"/>
<text x="103.4" y="821.6" font-size="11.0" fill="#ccccdc" text-anchor="middle" font-weight="normal" font-style="normal" stroke="#ccccdc" stroke-width="0.22" textLength="37.37" lengthAdjust="spacingAndGlyphs">15:03:30</text>
<line x1="176.6" y1="645.0" x2="176.6" y2="808.4" stroke="rgba(204,204,220,0.055)" stroke-width="1"/>
<text x="176.6" y="821.6" font-size="11.0" fill="#ccccdc" text-anchor="middle" font-weight="normal" font-style="normal" stroke="#ccccdc" stroke-width="0.22" textLength="37.37" lengthAdjust="spacingAndGlyphs">15:04:00</text>
<line x1="249.7" y1="645.0" x2="249.7" y2="808.4" stroke="rgba(204,204,220,0.055)" stroke-width="1"/>
<text x="249.7" y="821.6" font-size="11.0" fill="#ccccdc" text-anchor="middle" font-weight="normal" font-style="normal" stroke="#ccccdc" stroke-width="0.22" textLength="37.37" lengthAdjust="spacingAndGlyphs">15:04:30</text>
<line x1="322.9" y1="645.0" x2="322.9" y2="808.4" stroke="rgba(204,204,220,0.055)" stroke-width="1"/>
<text x="322.9" y="821.6" font-size="11.0" fill="#ccccdc" text-anchor="middle" font-weight="normal" font-style="normal" stroke="#ccccdc" stroke-width="0.22" textLength="37.37" lengthAdjust="spacingAndGlyphs">15:05:00</text>
<line x1="396.1" y1="645.0" x2="396.1" y2="808.4" stroke="rgba(204,204,220,0.055)" stroke-width="1"/>
<text x="396.1" y="821.6" font-size="11.0" fill="#ccccdc" text-anchor="middle" font-weight="normal" font-style="normal" stroke="#ccccdc" stroke-width="0.22" textLength="37.37" lengthAdjust="spacingAndGlyphs">15:05:30</text>
<line x1="469.2" y1="645.0" x2="469.2" y2="808.4" stroke="rgba(204,204,220,0.055)" stroke-width="1"/>
<text x="469.2" y="821.6" font-size="11.0" fill="#ccccdc" text-anchor="middle" font-weight="normal" font-style="normal" stroke="#ccccdc" stroke-width="0.22" textLength="37.37" lengthAdjust="spacingAndGlyphs">15:06:00</text>
<line x1="542.4" y1="645.0" x2="542.4" y2="808.4" stroke="rgba(204,204,220,0.055)" stroke-width="1"/>
<text x="542.4" y="821.6" font-size="11.0" fill="#ccccdc" text-anchor="middle" font-weight="normal" font-style="normal" stroke="#ccccdc" stroke-width="0.22" textLength="37.37" lengthAdjust="spacingAndGlyphs">15:06:30</text>
<line x1="615.6" y1="645.0" x2="615.6" y2="808.4" stroke="rgba(204,204,220,0.055)" stroke-width="1"/>
<text x="615.6" y="821.6" font-size="11.0" fill="#ccccdc" text-anchor="middle" font-weight="normal" font-style="normal" stroke="#ccccdc" stroke-width="0.22" textLength="37.37" lengthAdjust="spacingAndGlyphs">15:07:00</text>
<line x1="688.8" y1="645.0" x2="688.8" y2="808.4" stroke="rgba(204,204,220,0.055)" stroke-width="1"/>
<text x="688.8" y="821.6" font-size="11.0" fill="#ccccdc" text-anchor="middle" font-weight="normal" font-style="normal" stroke="#ccccdc" stroke-width="0.22" textLength="37.37" lengthAdjust="spacingAndGlyphs">15:07:30</text>
<line x1="761.9" y1="645.0" x2="761.9" y2="808.4" stroke="rgba(204,204,220,0.055)" stroke-width="1"/>
<text x="761.9" y="821.6" font-size="11.0" fill="#ccccdc" text-anchor="middle" font-weight="normal" font-style="normal" stroke="#ccccdc" stroke-width="0.22" textLength="37.37" lengthAdjust="spacingAndGlyphs">15:08:00</text>
<clipPath id="c224"><rect x="92.0" y="633.0" width="731.3" height="175.4"/></clipPath>
<g clip-path="url(#c224)">
<path d="M92.0,767.6 L103.4,794.8 L141.2,781.0 L250.8,748.6 L287.1,733.7 L360.1,710.0 L396.0,794.8 L433.0,780.2 L469.8,763.0 L506.3,704.9 L543.6,691.9 L579.3,675.6 L615.9,664.0 L652.9,781.1 L799.0,723.5 L799.0,810.4 L92.0,810.4Z" fill="#73bf69" fill-opacity="0.1"/>
<path d="M92.0,767.6 L103.4,794.8 L141.2,781.0 L250.8,748.6 L287.1,733.7 L360.1,710.0 L396.0,794.8 L433.0,780.2 L469.8,763.0 L506.3,704.9 L543.6,691.9 L579.3,675.6 L615.9,664.0 L652.9,781.1 L799.0,723.5" fill="none" stroke="#73bf69" stroke-width="1.2" stroke-opacity="0.88" stroke-linejoin="round"/>
</g>
<line x1="881.1" y1="645.4" x2="1600.0" y2="645.4" stroke="rgba(204,204,220,0.055)" stroke-width="1"/>
<text x="877.0" y="649.0" font-size="11.0" fill="#ccccdc" text-anchor="end" font-weight="normal" font-style="normal" stroke="#ccccdc" stroke-width="0.22" textLength="27.76" lengthAdjust="spacingAndGlyphs">3.50 K</text>
<line x1="881.1" y1="675.6" x2="1600.0" y2="675.6" stroke="rgba(204,204,220,0.055)" stroke-width="1"/>
<text x="877.0" y="679.2" font-size="11.0" fill="#ccccdc" text-anchor="end" font-weight="normal" font-style="normal" stroke="#ccccdc" stroke-width="0.22" textLength="14.41" lengthAdjust="spacingAndGlyphs">3 K</text>
<line x1="881.1" y1="705.6" x2="1600.0" y2="705.6" stroke="rgba(204,204,220,0.055)" stroke-width="1"/>
<text x="877.0" y="709.2" font-size="11.0" fill="#ccccdc" text-anchor="end" font-weight="normal" font-style="normal" stroke="#ccccdc" stroke-width="0.22" textLength="27.76" lengthAdjust="spacingAndGlyphs">2.50 K</text>
<line x1="881.1" y1="735.8" x2="1600.0" y2="735.8" stroke="rgba(204,204,220,0.055)" stroke-width="1"/>
<text x="877.0" y="739.4" font-size="11.0" fill="#ccccdc" text-anchor="end" font-weight="normal" font-style="normal" stroke="#ccccdc" stroke-width="0.22" textLength="14.41" lengthAdjust="spacingAndGlyphs">2 K</text>
<line x1="881.1" y1="765.8" x2="1600.0" y2="765.8" stroke="rgba(204,204,220,0.055)" stroke-width="1"/>
<text x="877.0" y="769.4" font-size="11.0" fill="#ccccdc" text-anchor="end" font-weight="normal" font-style="normal" stroke="#ccccdc" stroke-width="0.22" textLength="27.76" lengthAdjust="spacingAndGlyphs">1.50 K</text>
<line x1="881.1" y1="796.2" x2="1600.0" y2="796.2" stroke="rgba(204,204,220,0.055)" stroke-width="1"/>
<text x="877.0" y="799.8" font-size="11.0" fill="#ccccdc" text-anchor="end" font-weight="normal" font-style="normal" stroke="#ccccdc" stroke-width="0.22" textLength="14.41" lengthAdjust="spacingAndGlyphs">1 K</text>
<line x1="895.6" y1="645.0" x2="895.6" y2="808.0" stroke="rgba(204,204,220,0.055)" stroke-width="1"/>
<text x="895.6" y="821.6" font-size="11.0" fill="#ccccdc" text-anchor="middle" font-weight="normal" font-style="normal" stroke="#ccccdc" stroke-width="0.22" textLength="37.37" lengthAdjust="spacingAndGlyphs">15:03:30</text>
<line x1="968.5" y1="645.0" x2="968.5" y2="808.0" stroke="rgba(204,204,220,0.055)" stroke-width="1"/>
<text x="968.5" y="821.6" font-size="11.0" fill="#ccccdc" text-anchor="middle" font-weight="normal" font-style="normal" stroke="#ccccdc" stroke-width="0.22" textLength="37.37" lengthAdjust="spacingAndGlyphs">15:04:00</text>
<line x1="1041.5" y1="645.0" x2="1041.5" y2="808.0" stroke="rgba(204,204,220,0.055)" stroke-width="1"/>
<text x="1041.5" y="821.6" font-size="11.0" fill="#ccccdc" text-anchor="middle" font-weight="normal" font-style="normal" stroke="#ccccdc" stroke-width="0.22" textLength="37.37" lengthAdjust="spacingAndGlyphs">15:04:30</text>
<line x1="1114.4" y1="645.0" x2="1114.4" y2="808.0" stroke="rgba(204,204,220,0.055)" stroke-width="1"/>
<text x="1114.4" y="821.6" font-size="11.0" fill="#ccccdc" text-anchor="middle" font-weight="normal" font-style="normal" stroke="#ccccdc" stroke-width="0.22" textLength="37.37" lengthAdjust="spacingAndGlyphs">15:05:00</text>
<line x1="1187.4" y1="645.0" x2="1187.4" y2="808.0" stroke="rgba(204,204,220,0.055)" stroke-width="1"/>
<text x="1187.4" y="821.6" font-size="11.0" fill="#ccccdc" text-anchor="middle" font-weight="normal" font-style="normal" stroke="#ccccdc" stroke-width="0.22" textLength="37.37" lengthAdjust="spacingAndGlyphs">15:05:30</text>
<line x1="1260.3" y1="645.0" x2="1260.3" y2="808.0" stroke="rgba(204,204,220,0.055)" stroke-width="1"/>
<text x="1260.3" y="821.6" font-size="11.0" fill="#ccccdc" text-anchor="middle" font-weight="normal" font-style="normal" stroke="#ccccdc" stroke-width="0.22" textLength="37.37" lengthAdjust="spacingAndGlyphs">15:06:00</text>
<line x1="1333.2" y1="645.0" x2="1333.2" y2="808.0" stroke="rgba(204,204,220,0.055)" stroke-width="1"/>
<text x="1333.2" y="821.6" font-size="11.0" fill="#ccccdc" text-anchor="middle" font-weight="normal" font-style="normal" stroke="#ccccdc" stroke-width="0.22" textLength="37.37" lengthAdjust="spacingAndGlyphs">15:06:30</text>
<line x1="1406.2" y1="645.0" x2="1406.2" y2="808.0" stroke="rgba(204,204,220,0.055)" stroke-width="1"/>
<text x="1406.2" y="821.6" font-size="11.0" fill="#ccccdc" text-anchor="middle" font-weight="normal" font-style="normal" stroke="#ccccdc" stroke-width="0.22" textLength="37.37" lengthAdjust="spacingAndGlyphs">15:07:00</text>
<line x1="1479.1" y1="645.0" x2="1479.1" y2="808.0" stroke="rgba(204,204,220,0.055)" stroke-width="1"/>
<text x="1479.1" y="821.6" font-size="11.0" fill="#ccccdc" text-anchor="middle" font-weight="normal" font-style="normal" stroke="#ccccdc" stroke-width="0.22" textLength="37.37" lengthAdjust="spacingAndGlyphs">15:07:30</text>
<line x1="1552.1" y1="645.0" x2="1552.1" y2="808.0" stroke="rgba(204,204,220,0.055)" stroke-width="1"/>
<text x="1552.1" y="821.6" font-size="11.0" fill="#ccccdc" text-anchor="middle" font-weight="normal" font-style="normal" stroke="#ccccdc" stroke-width="0.22" textLength="37.37" lengthAdjust="spacingAndGlyphs">15:08:00</text>
<clipPath id="c261"><rect x="883.9" y="633.0" width="716.1" height="175.0"/></clipPath>
<g clip-path="url(#c261)">
<path d="M884.0,790.0 L895.6,794.1 L932.0,788.5 L968.6,787.9 L1005.0,776.3 L1040.8,783.0 L1077.5,777.0 L1114.4,771.7 L1150.4,767.1 L1186.9,786.0 L1222.0,781.8 L1260.6,771.2 L1297.0,662.2 L1333.6,666.2 L1370.0,668.9 L1406.0,761.4 L1443.0,771.7 L1479.7,771.7 L1516.5,769.5 L1552.1,757.3 L1588.7,761.4 L1588.7,810.0 L884.0,810.0Z" fill="#73bf69" fill-opacity="0.1"/>
<path d="M884.0,790.0 L895.6,794.1 L932.0,788.5 L968.6,787.9 L1005.0,776.3 L1040.8,783.0 L1077.5,777.0 L1114.4,771.7 L1150.4,767.1 L1186.9,786.0 L1222.0,781.8 L1260.6,771.2 L1297.0,662.2 L1333.6,666.2 L1370.0,668.9 L1406.0,761.4 L1443.0,771.7 L1479.7,771.7 L1516.5,769.5 L1552.1,757.3 L1588.7,761.4" fill="none" stroke="#73bf69" stroke-width="1.2" stroke-opacity="0.88" stroke-linejoin="round"/>
</g>
<text x="444.5" y="169.7" font-size="10.6" fill="#cdced8" text-anchor="middle" font-weight="bold" font-style="normal" >Memory in Off-Heap</text>
<text x="1234.3" y="169.7" font-size="10.6" fill="#cdced8" text-anchor="middle" font-weight="bold" font-style="normal" >Memory in Heap</text>
<text x="444.5" y="397.8" font-size="10.6" fill="#cdced8" text-anchor="middle" font-weight="bold" font-style="normal" >Memory in Stack</text>
<text x="1234.3" y="397.8" font-size="10.6" fill="#cdced8" text-anchor="middle" font-weight="bold" font-style="normal" >Total Used Memory</text>
<text x="444.5" y="625.5" font-size="10.6" fill="#cdced8" text-anchor="middle" font-weight="bold" font-style="normal" >Number of Live Objects</text>
<text x="1234.3" y="625.5" font-size="10.6" fill="#cdced8" text-anchor="middle" font-weight="bold" font-style="normal" >Rate of Objects Allocated</text>
<text x="72.5" y="22.3" font-size="14" fill="#cfd0da" text-anchor="start" font-weight="normal" font-style="normal" stroke="#cfd0da" stroke-width="0.22" >General</text>
<text x="128.7" y="22.3" font-size="14" fill="#cfd0da" text-anchor="start" font-weight="normal" font-style="normal" stroke="#cfd0da" stroke-width="0.22" >/ provider runtimes</text>
<text x="59.4" y="53.6" font-size="9.8" fill="#6e9fff" text-anchor="start" font-weight="normal" font-style="normal" stroke="#6e9fff" stroke-width="0.45" >host</text>
<text x="94.6" y="53.8" font-size="11" fill="#cfd0da" text-anchor="start" font-weight="normal" font-style="normal" stroke="#cfd0da" stroke-width="0.5" >local</text>
<text x="67.5" y="83.8" font-size="12.5" fill="#d8d9e3" text-anchor="start" font-weight="bold" font-style="normal" >boostd</text>
<text x="122.0" y="83.0" font-size="9.5" fill="#a0a1ad" text-anchor="start" font-weight="normal" font-style="italic" stroke="#a0a1ad" stroke-width="0.22" >(10 panels)</text>
<text x="67.5" y="112.0" font-size="12.5" fill="#d8d9e3" text-anchor="start" font-weight="bold" font-style="normal" >booster-http</text>
<text x="155.0" y="111.3" font-size="9.5" fill="#a0a1ad" text-anchor="start" font-weight="normal" font-style="italic" stroke="#a0a1ad" stroke-width="0.22" >(10 panels)</text>
<text x="67.5" y="140.6" font-size="12.5" fill="#d8d9e3" text-anchor="start" font-weight="bold" font-style="normal" >booster-bitswap</text>
<text x="1387.6" y="20.8" font-size="10.6" fill="#c0c1cb" text-anchor="start" font-weight="bold" font-style="normal" >Last 5 minutes</text>
<text x="1552.7" y="20.8" font-size="11.5" fill="#c0c1cb" text-anchor="start" font-weight="bold" font-style="normal" >30s</text>
<defs><linearGradient id="glg" x1="0" y1="0" x2="0" y2="1"><stop offset="0" stop-color="#f05a28"/><stop offset="1" stop-color="#fbca0a"/></linearGradient></defs>
<polygon points="28.19,20.72 27.94,22.39 25.84,23.25 25.14,24.41 25.38,26.67 24.02,27.68 21.92,26.80 20.61,27.13 19.18,28.89 17.51,28.64 16.65,26.54 15.49,25.84 13.23,26.08 12.22,24.72 13.10,22.62 12.77,21.31 11.01,19.88 11.26,18.21 13.36,17.35 14.06,16.19 13.82,13.93 15.18,12.92 17.28,13.80 18.59,13.47 20.02,11.71 21.69,11.96 22.55,14.06 23.71,14.76 25.97,14.52 26.98,15.88 26.10,17.98 26.43,19.29" fill="url(#glg)" stroke="url(#glg)" stroke-width="0.8" stroke-linejoin="round"/>
<path d="M25.2,18.2 A5.0,5.0 0 1,0 24.4,24.2" fill="none" stroke="#181b1f" stroke-width="2.3" stroke-linecap="round"/>
<circle cx="20.8" cy="21.3" r="2.6" fill="none" stroke="#f39420" stroke-width="1.6"/>
<circle cx="21.0" cy="21.5" r="1.2" fill="#181b1f"/>
<circle cx="40" cy="37.5" r="9" fill="#202227"/>
<path d="M38.3,34.2 L41.6,37.5 L38.3,40.8" fill="none" stroke="#d8d9e3" stroke-width="1.4" stroke-linecap="round" stroke-linejoin="round"/>
<circle cx="18.3" cy="55.4" r="5.6" fill="none" stroke="#9a9ba6" stroke-width="1.4"/>
<line x1="22.4" y1="59.5" x2="25.8" y2="63" stroke="#9a9ba6" stroke-width="1.5" stroke-linecap="round"/>
<polygon points="18.90,85.00 20.84,89.73 25.94,90.11 22.04,93.42 23.25,98.39 18.90,95.70 14.55,98.39 15.76,93.42 11.86,90.11 16.96,89.73" fill="none" stroke="#9a9ba6" stroke-width="1.35" stroke-linejoin="round"/>
<rect x="11.8" y="120.8" width="5.8" height="5.8" fill="none" stroke="#d8d9e3" stroke-width="1.5"/>
<rect x="11.8" y="129.6" width="5.8" height="5.8" fill="none" stroke="#d8d9e3" stroke-width="1.5"/>
<rect x="20.6" y="120.8" width="5.8" height="5.8" fill="none" stroke="#d8d9e3" stroke-width="1.5"/>
<rect x="20.6" y="129.6" width="5.8" height="5.8" fill="none" stroke="#d8d9e3" stroke-width="1.5"/>
<defs><linearGradient id="obar" x1="0" y1="0" x2="0" y2="1"><stop offset="0" stop-color="#f55f3e"/><stop offset="1" stop-color="#ff8a2a"/></linearGradient></defs>
<rect x="4" y="119.3" width="3" height="18" rx="1.2" fill="url(#obar)"/>
<circle cx="19" cy="164.1" r="6.9" fill="none" stroke="#9a9ba6" stroke-width="1.6"/>
<path d="M22.3,160.8 L20.6,165.8 L15.7,167.4 L17.4,162.5 Z" fill="#9a9ba6"/>
<circle cx="19" cy="164.1" r="0.9" fill="#181b1f"/>
<path d="M14.6,203.6 L14.6,199.2 A4.4,4.6 0 0,1 23.4,199.2 L23.4,203.6" fill="none" stroke="#9a9ba6" stroke-width="1.5" stroke-linejoin="round"/>
<rect x="12.8" y="203.4" width="12.4" height="2" rx="1" fill="#9a9ba6"/>
<path d="M17.3,206.6 A1.8,1.6 0 0,0 20.7,206.6" fill="none" stroke="#9a9ba6" stroke-width="1.3"/>
<circle cx="19" cy="193.9" r="0.9" fill="#9a9ba6"/>
<polygon points="25.99,700.65 25.79,702.03 24.23,702.82 23.64,703.81 23.67,705.56 22.55,706.39 20.89,705.86 19.77,706.14 18.55,707.39 17.17,707.19 16.38,705.63 15.39,705.04 13.64,705.07 12.81,703.95 13.34,702.29 13.06,701.17 11.81,699.95 12.01,698.57 13.57,697.78 14.16,696.79 14.13,695.04 15.25,694.21 16.91,694.74 18.03,694.46 19.25,693.21 20.63,693.41 21.42,694.97 22.41,695.56 24.16,695.53 24.99,696.65 24.46,698.31 24.74,699.43" fill="none" stroke="#9a9ba6" stroke-width="1.3" stroke-linejoin="round"/>
<circle cx="18.9" cy="700.3" r="2.4" fill="none" stroke="#9a9ba6" stroke-width="1.3"/>
<path d="M19,728.6 L25,731 L25,736.5 C25,740 22.2,742.2 19,743.2 C15.8,742.2 13,740 13,736.5 L13,731 Z" fill="none" stroke="#9a9ba6" stroke-width="1.4" stroke-linejoin="round"/>
<clipPath id="avc"><circle cx="19.04" cy="772" r="9"/></clipPath>
<g clip-path="url(#avc)"><rect x="9" y="762" width="20" height="20" fill="#4e7010"/>
<rect x="11.70" y="765.00" width="2.15" height="1.90" fill="#f08878"/>
<rect x="24.20" y="765.00" width="2.15" height="1.90" fill="#f08878"/>
<rect x="15.20" y="765.00" width="2.00" height="7.20" fill="#f08878"/>
<rect x="21.00" y="765.00" width="1.90" height="7.20" fill="#f08878"/>
<rect x="15.20" y="766.90" width="7.70" height="2.30" fill="#f08878"/>
<rect x="11.00" y="772.20" width="5.00" height="8.30" fill="#f08878"/>
<rect x="22.10" y="772.20" width="4.90" height="8.30" fill="#f08878"/>
<rect x="17.20" y="774.00" width="3.80" height="1.90" fill="#f08878"/>
<rect x="17.20" y="778.00" width="3.80" height="2.00" fill="#f08878"/>
</g>
<circle cx="18.9" cy="808.6" r="7.6" fill="none" stroke="#9a9ba6" stroke-width="1.4"/>
<path d="M16.7,806.4 A2.3,2.3 0 1,1 19.3,808.6 L18.9,809 L18.9,810" fill="none" stroke="#9a9ba6" stroke-width="1.4" stroke-linecap="round"/>
<circle cx="18.9" cy="812.4" r="0.9" fill="#9a9ba6"/>
<rect x="54.3" y="12.2" width="4.2" height="4.2" fill="none" stroke="#c8c9d3" stroke-width="1.3"/>
<rect x="54.3" y="18.2" width="4.2" height="4.2" fill="none" stroke="#c8c9d3" stroke-width="1.3"/>
<rect x="60.3" y="12.2" width="4.2" height="4.2" fill="none" stroke="#c8c9d3" stroke-width="1.3"/>
<rect x="60.3" y="18.2" width="4.2" height="4.2" fill="none" stroke="#c8c9d3" stroke-width="1.3"/>
<polygon points="261.10,11.60 262.75,15.53 267.00,15.88 263.76,18.67 264.74,22.82 261.10,20.60 257.46,22.82 258.44,18.67 255.20,15.88 259.45,15.53" fill="none" stroke="#c8c9d3" stroke-width="1.3" stroke-linejoin="round"/>
<circle cx="290.2" cy="13.2" r="2" fill="none" stroke="#c8c9d3" stroke-width="1.3"/><circle cx="290.2" cy="21.4" r="2" fill="none" stroke="#c8c9d3" stroke-width="1.3"/><circle cx="282.6" cy="17.3" r="2" fill="none" stroke="#c8c9d3" stroke-width="1.3"/>
<path d="M284.4,16.3 L288.4,14.2 M284.4,18.3 L288.4,20.4" stroke="#c8c9d3" stroke-width="1.3"/>
<rect x="1266.0" y="15.3" width="2.2" height="6.5" fill="#a6a7b1"/>
<rect x="1269.2" y="14.3" width="2.2" height="7.5" fill="#a6a7b1"/>
<rect x="1272.4" y="16.2" width="2.2" height="5.6" fill="#a6a7b1"/>
<rect x="1275.6" y="12.0" width="2.2" height="9.8" fill="#a6a7b1"/>
<path d="M1280.8,14.2 L1280.8,20.6 M1277.6,17.4 L1284,17.4" stroke="#f5a623" stroke-width="2"/>
<path d="M1305,12.8 L1312.6,12.8 L1315,15.2 L1315,21.6 L1305,21.6 Z M1307.3,21.6 L1307.3,18.2 L1312.7,18.2 L1312.7,21.6 M1307.5,12.8 L1307.5,15 L1311.5,15 L1311.5,12.8" fill="none" stroke="#9a9ba6" stroke-width="1.3" stroke-linejoin="round"/>
<polygon points="1347.69,17.68 1347.53,18.78 1346.25,19.41 1345.78,20.20 1345.83,21.62 1344.93,22.29 1343.58,21.83 1342.69,22.05 1341.72,23.09 1340.62,22.93 1339.99,21.65 1339.20,21.18 1337.78,21.23 1337.11,20.33 1337.57,18.98 1337.35,18.09 1336.31,17.12 1336.47,16.02 1337.75,15.39 1338.22,14.60 1338.17,13.18 1339.07,12.51 1340.42,12.97 1341.31,12.75 1342.28,11.71 1343.38,11.87 1344.01,13.15 1344.80,13.62 1346.22,13.57 1346.89,14.47 1346.43,15.82 1346.65,16.71" fill="none" stroke="#9a9ba6" stroke-width="1.3" stroke-linejoin="round"/>
<circle cx="1342" cy="17.4" r="1.9" fill="none" stroke="#9a9ba6" stroke-width="1.3"/>
<circle cx="1374.9" cy="17.4" r="5.6" fill="none" stroke="#9a9ba6" stroke-width="1.3"/>
<path d="M1374.9,14.3 L1374.9,17.6 L1373,18.8" fill="none" stroke="#9a9ba6" stroke-width="1.3" stroke-linecap="round"/>
<path d="M1473.7,15.8 L1476.0,18.2 L1478.3,15.8" fill="none" stroke="#a6a7b1" stroke-width="1.2" stroke-linecap="round" stroke-linejoin="round"/>
<path d="M1579.0,15.8 L1581.3,18.2 L1583.6,15.8" fill="none" stroke="#a6a7b1" stroke-width="1.2" stroke-linecap="round" stroke-linejoin="round"/>
<circle cx="1500.3" cy="16.6" r="4.9" fill="none" stroke="#9a9ba6" stroke-width="1.3"/>
<path d="M1497.8,16.6 L1502.8,16.6 M1503.9,20.2 L1506.3,22.6" stroke="#9a9ba6" stroke-width="1.3" stroke-linecap="round"/>
<path d="M1528.4,15 A5,5 0 0,1 1537.6,15.2 M1537.9,19 A5,5 0 0,1 1528.5,19" fill="none" stroke="#9a9ba6" stroke-width="1.3" stroke-linecap="round"/>
<path d="M1527.5,12.6 L1528.2,15.4 L1531,14.8 M1538.6,21.6 L1538,18.7 L1535.2,19.3" fill="none" stroke="#9a9ba6" stroke-width="1.3" stroke-linecap="round" stroke-linejoin="round"/>
<line x1="1488" y1="6" x2="1488" y2="28" stroke="#111217" stroke-width="0.8" opacity="0.6"/>
<line x1="1546.3" y1="6" x2="1546.3" y2="28" stroke="#111217" stroke-width="1"/>
<path d="M122.8,48.9 L124.8,51.1 L126.8,48.9" fill="none" stroke="#c8c9d3" stroke-width="1.3" stroke-linecap="round" stroke-linejoin="round"/>
<path d="M59.8,77.8 L62.6,80.4 L59.8,83" fill="none" stroke="#d8d9e3" stroke-width="1.2" stroke-linecap="round" stroke-linejoin="round"/>
<path d="M59.8,106.4 L62.6,109 L59.8,111.6" fill="none" stroke="#d8d9e3" stroke-width="1.2" stroke-linecap="round" stroke-linejoin="round"/>
<path d="M59.3,136.2 L61.6,138.6 L63.9,136.2" fill="none" stroke="#d8d9e3" stroke-width="1.2" stroke-linecap="round" stroke-linejoin="round"/>
<path d="M843,610 L866,610 L843,633 Z" fill="#22252b"/>
<rect x="848" y="614.2" width="1.6" height="1.4" fill="#9a9ba6"/><rect x="848" y="616.4" width="1.6" height="4.2" fill="#9a9ba6"/></svg>
</body></html>
